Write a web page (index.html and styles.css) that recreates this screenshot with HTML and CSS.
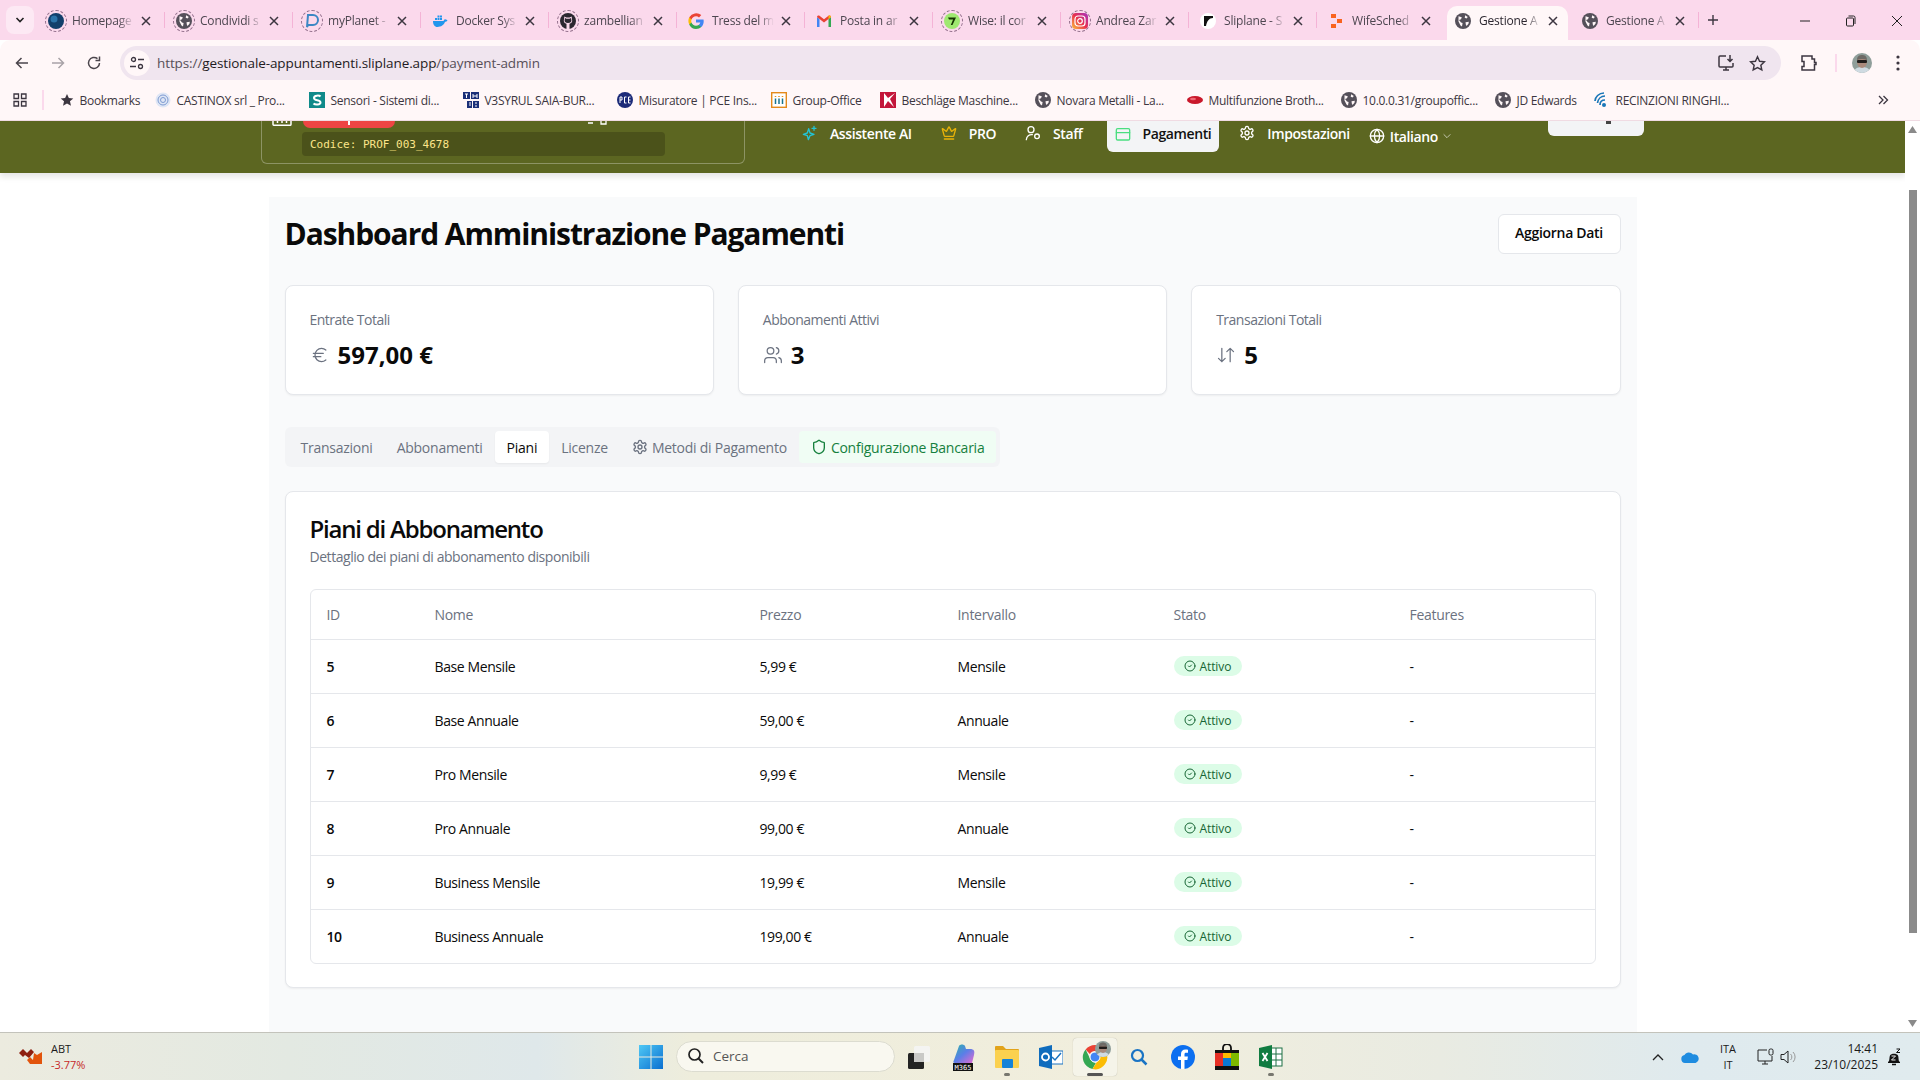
FILE: index.html
```html
<!doctype html>
<html>
    <head>
        <meta charset="utf-8">
        <title>Gestione Appuntamenti - Pagamenti</title>
        <link rel="stylesheet" href="styles.css">
    </head>
    <body>
        <svg class="defs" width="0" height="0">
            <symbol id="i-globe" viewBox="0 0 24 24"><circle cx="12" cy="12" r="10"/><path d="M12 2a14.5 14.5 0 0 0 0 20 14.5 14.5 0 0 0 0-20M2 12h20"/></symbol>
            <symbol id="i-crown" viewBox="0 0 24 24"><path d="M11.562 3.266a.5.5 0 0 1 .876 0L15.39 8.87a1 1 0 0 0 1.516.294L21.183 5.5a.5.5 0 0 1 .798.519l-2.834 10.246a1 1 0 0 1-.956.734H5.81a1 1 0 0 1-.957-.734L2.02 6.02a.5.5 0 0 1 .798-.519l4.276 3.664a1 1 0 0 0 1.516-.294zM5 21h14"/></symbol>
            <symbol id="i-gear" viewBox="0 0 24 24"><path d="M12.22 2h-.44a2 2 0 0 0-2 2v.18a2 2 0 0 1-1 1.73l-.43.25a2 2 0 0 1-2 0l-.15-.08a2 2 0 0 0-2.73.73l-.22.38a2 2 0 0 0 .73 2.73l.15.1a2 2 0 0 1 1 1.72v.51a2 2 0 0 1-1 1.74l-.15.09a2 2 0 0 0-.73 2.73l.22.38a2 2 0 0 0 2.73.73l.15-.08a2 2 0 0 1 2 0l.43.25a2 2 0 0 1 1 1.73V20a2 2 0 0 0 2 2h.44a2 2 0 0 0 2-2v-.18a2 2 0 0 1 1-1.73l.43-.25a2 2 0 0 1 2 0l.15.08a2 2 0 0 0 2.73-.73l.22-.39a2 2 0 0 0-.73-2.73l-.15-.08a2 2 0 0 1-1-1.74v-.5a2 2 0 0 1 1-1.74l.15-.09a2 2 0 0 0 .73-2.73l-.22-.38a2 2 0 0 0-2.73-.73l-.15.08a2 2 0 0 1-2 0l-.43-.25a2 2 0 0 1-1-1.73V4a2 2 0 0 0-2-2z"/><circle cx="12" cy="12" r="3"/></symbol>
            <symbol id="i-check" viewBox="0 0 24 24"><circle cx="12" cy="12" r="10"/><path d="m9 12 2 2 4-4"/></symbol>
            <symbol id="f-globe" viewBox="0 0 16 16"><circle cx="8" cy="8" r="8" fill="#55505a"/><path d="M3.5 3.2 6.8 4.2 6 6.3 4 7 6 9.5 7.6 10 7 13.5 5.5 12.5 3.5 8.5ZM10.200 2.200 12.800 4 11.500 5.600 9.700 4.800ZM10.500 9.200 13.800 8.800 13.500 10.800 11.500 13 10.800 11.500Z" fill="#fff7f8"/></symbol>
            <symbol id="f-close" viewBox="0 0 12 12"><path d="M2 2 10 10M10 2 2 10" fill="none" stroke="#3c3640" stroke-width="1.5"/></symbol>
        </svg>

        <div class="tabstrip">
            <div class="tab-menu"><svg width="10" height="10" viewBox="0 0 10 10"><path d="M1.5 3 5 6.5 8.5 3" fill="none" stroke="#222" stroke-width="1.6"/></svg></div>
            <div class="tab">
                <span class="fav fav-ring"><svg viewBox="0 0 16 16"><circle cx="8" cy="8" r="8" fill="#123f6b"/><circle cx="6" cy="6" r="3.5" fill="#2b73a8"/></svg></span>
                <span class="tab-title">Homepage</span>
                <svg class="tab-close"><use href="#f-close"/></svg>
            </div>
            <div class="tab">
                <span class="fav fav-ring"><svg viewBox="0 0 16 16"><use href="#f-globe"/></svg></span>
                <span class="tab-title">Condividi s</span>
                <svg class="tab-close"><use href="#f-close"/></svg>
            </div>
            <div class="tab">
                <span class="fav fav-ring"><svg viewBox="0 0 16 16"><path d="M4 2h5a5 5 0 0 1 0 10H4l-1 2Z" fill="none" stroke="#3b87c4" stroke-width="2"/></svg></span>
                <span class="tab-title">myPlanet -</span>
                <svg class="tab-close"><use href="#f-close"/></svg>
            </div>
            <div class="tab">
                <span class="fav"><svg viewBox="0 0 16 16"><path d="M1 8h10.500c.6-1.500 1.500-2 2.200-1.500.8.100 1.300.5 1.800 1-.6 1-1.500 1.300-2.500 1.300C12 12 9 14 5.500 14 2.500 14 1 11.500 1 8Z" fill="#2396ed"/><path d="M3 5h2v2H3ZM5.500 5h2v2h-2ZM8 5h2v2H8ZM5.500 2.500h2v2h-2ZM8 2.500h2v2H8Z" fill="#2396ed"/></svg></span>
                <span class="tab-title">Docker Sys</span>
                <svg class="tab-close"><use href="#f-close"/></svg>
            </div>
            <div class="tab">
                <span class="fav fav-ring"><svg viewBox="0 0 16 16"><circle cx="8" cy="8" r="8" fill="#2b2730"/><path d="M4 6.500 4.300 3.500 6.500 4.500H9.500L11.700 3.500 12 6.500C12.800 9 11 10.500 9.500 10.700V16H6.500V10.700C5 10.500 3.200 9 4 6.500Z" fill="#fbd9ec"/><path d="M4.700 6.800 5 5l1.500.8h3L11 5l.3 1.800C12 8.800 10.500 10 8 10S4 8.800 4.700 6.800Z" fill="#2b2730"/></svg></span>
                <span class="tab-title">zambellian</span>
                <svg class="tab-close"><use href="#f-close"/></svg>
            </div>
            <div class="tab">
                <span class="fav"><svg viewBox="0 0 16 16"><path d="M15.700 8.200c0-.6-.1-1.100-.2-1.600H8v3h4.300a3.700 3.700 0 0 1-1.600 2.400v2h2.600c1.500-1.400 2.400-3.400 2.400-5.800Z" fill="#4285f4"/><path d="M8 16c2.200 0 4-.7 5.300-1.960l-2.600-2c-.7.500-1.600.8-2.700.8-2.100 0-3.900-1.400-4.500-3.300H1.300v2.100A8 8 0 0 0 8 16Z" fill="#34a853"/><path d="M3.500 9.500a4.800 4.800 0 0 1 0-3.100V4.300H1.300a8 8 0 0 0 0 7.300Z" fill="#fbbc05"/><path d="M8 3.200c1.200 0 2.200.4 3 1.200l2.300-2.300A8 8 0 0 0 1.300 4.300l2.200 2.100C4.100 4.600 5.900 3.200 8 3.200Z" fill="#ea4335"/></svg></span>
                <span class="tab-title">Tress del m</span>
                <svg class="tab-close"><use href="#f-close"/></svg>
            </div>
            <div class="tab">
                <span class="fav"><svg viewBox="0 0 16 16"><path d="M1 14V4l2.500 2v8Z" fill="#4285f4"/><path d="M15 14V4l-2.500 2v8Z" fill="#34a853"/><path d="M1 4c0-1.500 1.500-2 2.500-1.300L8 6.200l4.500-3.500C13.500 2 15 2.500 15 4l-2.500 2L8 9.500 3.500 6Z" fill="#ea4335"/><path d="M12.500 2.700C13.500 2 15 2.500 15 4l-2.500 2Z" fill="#fbbc05"/></svg></span>
                <span class="tab-title">Posta in ar</span>
                <svg class="tab-close"><use href="#f-close"/></svg>
            </div>
            <div class="tab">
                <span class="fav fav-ring"><svg viewBox="0 0 16 16"><circle cx="8" cy="8" r="8" fill="#9fe870"/><path d="M4 4.500h8L8.500 12H6.800l2.300-5.500H5Z" fill="#163300"/></svg></span>
                <span class="tab-title">Wise: il cor</span>
                <svg class="tab-close"><use href="#f-close"/></svg>
            </div>
            <div class="tab">
                <span class="fav fav-ring"><svg viewBox="0 0 16 16"><defs><linearGradient id="ig" x1="0" y1="1" x2="1" y2="0"><stop offset="0" stop-color="#fdc13a"/><stop offset=".5" stop-color="#e8304f"/><stop offset="1" stop-color="#a632c4"/></linearGradient></defs><rect width="16" height="16" rx="4" fill="url(#ig)"/><rect x="3" y="3" width="10" height="10" rx="3" fill="none" stroke="#fff" stroke-width="1.200"/><circle cx="8" cy="8" r="2.300" fill="none" stroke="#fff" stroke-width="1.200"/></svg></span>
                <span class="tab-title">Andrea Zar</span>
                <svg class="tab-close"><use href="#f-close"/></svg>
            </div>
            <div class="tab">
                <span class="fav"><svg viewBox="0 0 16 16"><circle cx="8" cy="8" r="8" fill="#fff"/><path d="M4 3h9v2C9 5 7 8 6 13H4Z" fill="#111"/></svg></span>
                <span class="tab-title">Sliplane - S</span>
                <svg class="tab-close"><use href="#f-close"/></svg>
            </div>
            <div class="tab">
                <span class="fav"><svg viewBox="0 0 16 16"><path d="M3 1h5v4H3ZM3 11h5v4H3ZM9 6h5v4H9Z" fill="#f9631f"/></svg></span>
                <span class="tab-title">WifeSched</span>
                <svg class="tab-close"><use href="#f-close"/></svg>
            </div>
            <div class="tab tab-active">
                <span class="fav"><svg viewBox="0 0 16 16"><use href="#f-globe"/></svg></span>
                <span class="tab-title">Gestione A</span>
                <svg class="tab-close"><use href="#f-close"/></svg>
            </div>
            <div class="tab">
                <span class="fav"><svg viewBox="0 0 16 16"><use href="#f-globe"/></svg></span>
                <span class="tab-title">Gestione A</span>
                <svg class="tab-close"><use href="#f-close"/></svg>
            </div>
            <div class="tab-new"><svg width="12" height="12" viewBox="0 0 12 12"><path d="M6 1v10M1 6h10" stroke="#3c3640" stroke-width="1.400"/></svg></div>
            <div class="win-controls">
                <svg width="12" height="12" viewBox="0 0 12 12"><path d="M1 6h10" stroke="#222" stroke-width="1"/></svg>
                <svg width="12" height="12" viewBox="0 0 12 12"><rect x="1.500" y="3" width="7" height="8" rx="1" fill="none" stroke="#222"/><path d="M3.500 1h5a1.500 1.500 0 0 1 1.500 1.500V9" fill="none" stroke="#222"/></svg>
                <svg width="12" height="12" viewBox="0 0 12 12"><path d="M1 1l10 10M11 1 1 11" stroke="#222"/></svg>
            </div>
        </div>

        <div class="toolbar">
            <svg class="tool-btn" viewBox="0 0 16 16"><path d="M14 8H3M7.500 3 2.500 8l5 5" fill="none" stroke="#4b454c" stroke-width="1.500"/></svg>
            <svg class="tool-btn" viewBox="0 0 16 16"><path d="M2 8h11M8.500 3l5 5-5 5" fill="none" stroke="#a9a3a8" stroke-width="1.500"/></svg>
            <svg class="tool-btn" viewBox="0 0 16 16"><path d="M13.500 8A5.500 5.500 0 1 1 11.500 3.700M13.500 1.500v4h-4" fill="none" stroke="#4b454c" stroke-width="1.500"/></svg>
            <div class="omnibox">
                <span class="site-chip"><svg width="16" height="16" viewBox="0 0 16 16"><circle cx="4.500" cy="4.500" r="2" fill="none" stroke="#3c3640" stroke-width="1.300"/><path d="M9 4.500h6M1 11.500h6" stroke="#3c3640" stroke-width="1.300"/><circle cx="11.500" cy="11.500" r="2" fill="none" stroke="#3c3640" stroke-width="1.300"/></svg></span>
                <span class="url"><span class="url-dim">https://</span>gestionale-appuntamenti.sliplane.app<span class="url-dim">/payment-admin</span></span>
                <svg class="omni-install" width="18" height="18" viewBox="0 0 18 18"><path d="M9 2H3a1 1 0 0 0-1 1v9a1 1 0 0 0 1 1h12a1 1 0 0 0 1-1V9M6 16h6M9 13v3" fill="none" stroke="#3c3640" stroke-width="1.500"/><path d="M13 1v6M10.500 5 13 7.500 15.500 5" fill="none" stroke="#3c3640" stroke-width="1.500"/></svg>
                <svg class="omni-star" width="17" height="17" viewBox="0 0 24 24"><path d="M12 2.500l2.900 6.300 6.900.8-5.100 4.700 1.400 6.800-6.100-3.400-6.100 3.400 1.400-6.800L2.200 9.600l6.900-.8Z" fill="none" stroke="#3c3640" stroke-width="2"/></svg>
            </div>
            <svg class="tool-ext" width="18" height="18" viewBox="0 0 18 18"><path d="M2 2h10v3h2.500v3.500H16v2h-1.500V16H2v-3.500h2V7.500H2Z" fill="none" stroke="#3c3640" stroke-width="1.500"/></svg>
            <span class="tool-sep"></span>
            <svg class="avatar" viewBox="0 0 20 20"><defs><clipPath id="av"><circle cx="10" cy="10" r="10"/></clipPath></defs><g clip-path="url(#av)"><rect width="20" height="20" fill="#8f9e9a"/><path d="M2 20c0-4 3-6 8-6s8 2 8 6Z" fill="#cfdbe2"/><ellipse cx="10" cy="9" rx="5" ry="6" fill="#a98a7c"/><path d="M5 7c0-4 2.500-5 5-5s5 1 5 5c-3-1.500-7-1.500-10 0Z" fill="#6d6a66"/><rect x="5" y="7" width="10" height="3" rx="1" fill="#1f1c1b"/></g></svg>
            <svg class="tool-menu" width="4" height="16" viewBox="0 0 4 16"><circle cx="2" cy="2" r="1.600" fill="#3c3640"/><circle cx="2" cy="8" r="1.600" fill="#3c3640"/><circle cx="2" cy="14" r="1.600" fill="#3c3640"/></svg>
        </div>

        <div class="bookmarks">
            <svg class="bm-apps" width="14" height="14" viewBox="0 0 14 14"><path d="M1 1h4.500v4.500H1ZM8.500 1H13v4.500H8.500ZM1 8.500h4.500V13H1ZM8.500 8.500H13V13H8.500Z" fill="none" stroke="#3c3640" stroke-width="1.300"/></svg>
            <span class="bm-sep"></span>
            <div class="bm bm-folder"><svg viewBox="0 0 24 24"><path d="M12 1.500l3.200 7 7.600.8-5.700 5 1.700 7.500-6.800-3.900-6.800 3.900 1.700-7.500-5.700-5 7.600-.8Z" fill="#3c3640"/></svg><span>Bookmarks</span></div>
            <div class="bm"><svg viewBox="0 0 16 16"><circle cx="8" cy="8" r="7.500" fill="#dfe6f5"/><circle cx="8" cy="8" r="5" fill="none" stroke="#7e9bd2"/><circle cx="8" cy="8" r="2.500" fill="none" stroke="#7e9bd2"/></svg><span>CASTINOX srl _ Pro...</span></div>
            <div class="bm"><svg viewBox="0 0 16 16"><rect width="16" height="16" fill="#0f8a8a"/><path d="M11.500 4.500C10.500 3.300 5 3 5 6c0 3 6.500 1.500 6.500 4.500 0 2.500-5.500 2.500-7 1" fill="none" stroke="#fff" stroke-width="2"/></svg><span>Sensori - Sistemi di...</span></div>
            <div class="bm"><svg viewBox="0 0 16 16"><path d="M0 0h7v7H0ZM8 0h8v7H8ZM4 9h5v7H4ZM10 9h6v7h-6Z" fill="#1a2f78"/><path d="M2 2h3M3.500 2v4M10 2v4M14 2v4M10 4h4M6 11h2M6 13h2M12 11h2M12 14h2" stroke="#fff" fill="none"/></svg><span>V3SYRUL SAIA-BUR...</span></div>
            <div class="bm"><svg viewBox="0 0 16 16"><circle cx="8" cy="8" r="8" fill="#1b2a78"/><path d="M3 5v6M3 5h2v3H3M7.500 5h2M7.500 5v6h2M11.500 5h2M11.500 5v6h2M11.500 8h2" fill="none" stroke="#fff"/></svg><span>Misuratore | PCE Ins...</span></div>
            <div class="bm bm-group"><svg viewBox="0 0 16 16"><rect x=".7" y=".7" width="14.600" height="14.600" fill="#fff" stroke="#e48a1c" stroke-width="1.400"/><path d="M4.500 4v1M8 4v1M11.500 4v1" stroke="#e48a1c" stroke-width="1.500"/><path d="M4.500 6.500V12M8 6.500V12M11.500 6.500V12" stroke="#18748f" stroke-width="1.500"/></svg><span>Group-Office</span></div>
            <div class="bm bm-besch"><svg viewBox="0 0 16 16"><rect width="16" height="16" fill="#c3163a"/><path d="M4 1v14l4-6 6 6-4-8 5-6-7 5Z" fill="#fff"/></svg><span>Beschläge Maschine...</span></div>
            <div class="bm bm-novara"><svg viewBox="0 0 16 16"><use href="#f-globe"/></svg><span>Novara Metalli - La...</span></div>
            <div class="bm"><svg viewBox="0 0 16 16"><ellipse cx="8" cy="8" rx="8" ry="4" fill="#c9182b"/><ellipse cx="6" cy="7" rx="3" ry="1.200" fill="#ef6a76"/></svg><span>Multifunzione Broth...</span></div>
            <div class="bm"><svg viewBox="0 0 16 16"><use href="#f-globe"/></svg><span>10.0.0.31/groupoffic...</span></div>
            <div class="bm bm-jd"><svg viewBox="0 0 16 16"><use href="#f-globe"/></svg><span>JD Edwards</span></div>
            <div class="bm"><svg viewBox="0 0 16 16"><path d="M1 9C1 5 5 1 10 1M3.500 11C4 7 7 4 11 4M6 13c0-3 2-5 5-5" fill="none" stroke="#1a77b8" stroke-width="1.700"/><circle cx="10" cy="13" r="2" fill="#1a77b8"/></svg><span>RECINZIONI RINGHI...</span></div>
            <svg class="bm-more" width="12" height="12" viewBox="0 0 12 12"><path d="M2 2l4 4-4 4M6.500 2l4 4-4 4" fill="none" stroke="#3c3640" stroke-width="1.300"/></svg>
        </div>

        <div class="viewport">
            <div class="page">
                <header class="app-header">
                    <div class="profile-box">
                        <div class="profile-top">
                            <svg class="profile-cal" width="20" height="5" viewBox="0 0 20 5"><path d="M1 0v3.300a1 1 0 0 0 1 1h16a1 1 0 0 0 1-1V0" fill="none" stroke="#fff" stroke-width="1.500"/><path d="M5.500 0v2M10 0v2M14.500 0v2" stroke="#fff" stroke-width="1.500"/></svg>
                            <span class="profile-pill"><span class="profile-pill-tick"></span></span>
                            <svg class="profile-tail" width="20" height="4" viewBox="0 0 20 4"><path d="M0 2h5M13 0v3h5V0" fill="none" stroke="#fff" stroke-width="1.300"/></svg>
                        </div>
                        <div class="profile-code">Codice: PROF_003_4678</div>
                    </div>
                    <nav class="nav">
                        <a class="nav-item"><svg class="ico ico-cyan" viewBox="0 0 24 24"><path d="M10 5.500 12 12l6 2-6 2-2.500 6-1.500-6-6-2 6-2ZM18 2v6M15 5h6"/></svg>Assistente AI</a>
                        <a class="nav-item"><svg class="ico ico-gold"><use href="#i-crown"/></svg>PRO</a>
                        <a class="nav-item"><svg class="ico" viewBox="0 0 24 24"><circle cx="9" cy="7" r="4.500"/><path d="M2 22a8 8 0 0 1 9-7.500"/><circle cx="18" cy="17" r="3.500"/></svg>Staff</a>
                        <a class="nav-item nav-active"><svg class="ico ico-green" viewBox="0 0 24 24"><rect x="2" y="4" width="20" height="17" rx="2"/><path d="M2 10h20"/></svg>Pagamenti</a>
                        <a class="nav-item"><svg class="ico"><use href="#i-gear"/></svg>Impostazioni</a>
                        <a class="nav-lang"><svg class="ico"><use href="#i-globe"/></svg>Italiano<svg class="nav-chevron" viewBox="0 0 24 24"><path d="m4 8 8 8 8-8"/></svg></a>
                    </nav>
                    <div class="header-btn"><span class="header-btn-dot"></span></div>
                </header>

                <main class="main">
                    <div class="title-row">
                        <h1>Dashboard Amministrazione Pagamenti</h1>
                        <button class="refresh">Aggiorna Dati</button>
                    </div>

                    <section class="stats">
                        <div class="stat">
                            <div class="stat-label">Entrate Totali</div>
                            <div class="stat-value"><svg class="stat-ico" viewBox="0 0 24 24"><path d="M4 10h12M4 14h9M19 6a7.700 7.700 0 0 0-5.200-2A7.900 7.900 0 0 0 6 12c0 4.400 3.500 8 7.800 8 2 0 3.800-.8 5.200-2"/></svg>597,00 €</div>
                        </div>
                        <div class="stat">
                            <div class="stat-label">Abbonamenti Attivi</div>
                            <div class="stat-value"><svg class="stat-ico" viewBox="0 0 24 24"><path d="M16 21v-2a4 4 0 0 0-4-4H6a4 4 0 0 0-4 4v2"/><circle cx="9" cy="7" r="4"/><path d="M22 21v-2a4 4 0 0 0-3-3.870M16 3.130a4 4 0 0 1 0 7.750"/></svg>3</div>
                        </div>
                        <div class="stat">
                            <div class="stat-label">Transazioni Totali</div>
                            <div class="stat-value"><svg class="stat-ico" viewBox="0 0 24 24"><path d="m3 16 4 4 4-4M7 20V4M21 8l-4-4-4 4M17 4v16"/></svg>5</div>
                        </div>
                    </section>

                    <div class="tabs">
                        <span class="tabs-item">Transazioni</span>
                        <span class="tabs-item">Abbonamenti</span>
                        <span class="tabs-item tabs-current">Piani</span>
                        <span class="tabs-item">Licenze</span>
                        <span class="tabs-item"><svg class="tabs-ico"><use href="#i-gear"/></svg>Metodi di Pagamento</span>
                        <span class="tabs-item tabs-bank"><svg class="tabs-ico" viewBox="0 0 24 24"><path d="M20 13c0 5-3.500 7.500-7.660 8.950a1 1 0 0 1-.67-.01C7.500 20.500 4 18 4 13V6a1 1 0 0 1 1-1c2 0 4.500-1.200 6.240-2.720a1.170 1.170 0 0 1 1.520 0C14.510 3.810 17 5 19 5a1 1 0 0 1 1 1z"/></svg>Configurazione Bancaria</span>
                    </div>

                    <section class="plans">
                        <h2>Piani di Abbonamento</h2>
                        <p class="plans-sub">Dettaglio dei piani di abbonamento disponibili</p>
                        <div class="table-wrap">
                            <table>
                                <colgroup>
                                    <col class="c-id"><col class="c-name"><col class="c-price"><col class="c-int"><col class="c-state"><col class="c-feat">
                                </colgroup>
                                <thead>
                                    <tr><th>ID</th><th>Nome</th><th>Prezzo</th><th>Intervallo</th><th>Stato</th><th>Features</th></tr>
                                </thead>
                                <tbody>
                                    <tr><td class="cell-id">5</td><td>Base Mensile</td><td>5,99 €</td><td>Mensile</td><td><span class="badge"><svg><use href="#i-check"/></svg>Attivo</span></td><td>-</td></tr>
                                    <tr><td class="cell-id">6</td><td>Base Annuale</td><td>59,00 €</td><td>Annuale</td><td><span class="badge"><svg><use href="#i-check"/></svg>Attivo</span></td><td>-</td></tr>
                                    <tr><td class="cell-id">7</td><td>Pro Mensile</td><td>9,99 €</td><td>Mensile</td><td><span class="badge"><svg><use href="#i-check"/></svg>Attivo</span></td><td>-</td></tr>
                                    <tr><td class="cell-id">8</td><td>Pro Annuale</td><td>99,00 €</td><td>Annuale</td><td><span class="badge"><svg><use href="#i-check"/></svg>Attivo</span></td><td>-</td></tr>
                                    <tr><td class="cell-id">9</td><td>Business Mensile</td><td>19,99 €</td><td>Mensile</td><td><span class="badge"><svg><use href="#i-check"/></svg>Attivo</span></td><td>-</td></tr>
                                    <tr><td class="cell-id">10</td><td>Business Annuale</td><td>199,00 €</td><td>Annuale</td><td><span class="badge"><svg><use href="#i-check"/></svg>Attivo</span></td><td>-</td></tr>
                                </tbody>
                            </table>
                        </div>
                    </section>
                </main>
            </div>
            <div class="scrollbar">
                <svg width="9" height="7" viewBox="0 0 9 7"><path d="M4.500 0 9 7H0Z" fill="#8a8a8a"/></svg>
                <div class="scroll-thumb"></div>
                <svg width="9" height="7" viewBox="0 0 9 7"><path d="M4.500 7 0 0h9Z" fill="#8a8a8a"/></svg>
            </div>
        </div>

        <footer class="taskbar">
            <div class="widget">
                <svg width="24" height="18" viewBox="0 0 24 18"><path d="M0 6 4 2l4 4 4-4 3 3-5 6-4-3-2 2Z" fill="#8e1f10"/><path d="M15 6l3 2 5-3v12H11l-3-4 3-3 3 3Z" fill="#e2540c"/></svg>
                <div class="widget-text"><span>ABT</span><span class="widget-down">-3.77%</span></div>
            </div>
            <div class="task-center">
                <div class="task-icon"><svg width="24" height="24" viewBox="0 0 24 24"><defs><linearGradient id="win" x1="0" y1="0" x2="1" y2="1"><stop offset="0" stop-color="#4fc8f5"/><stop offset="1" stop-color="#0a6fd0"/></linearGradient></defs><path d="M0 0h11.500v11.500H0ZM12.500 0H24v11.500H12.500ZM0 12.500h11.500V24H0ZM12.500 12.500H24V24H12.500Z" fill="url(#win)"/></svg></div>
                <div class="search"><svg width="18" height="18" viewBox="0 0 18 18"><circle cx="7.500" cy="7.500" r="5.500" fill="none" stroke="#222" stroke-width="1.700"/><path d="M11.500 11.500 16 16" stroke="#222" stroke-width="1.900"/></svg><span>Cerca</span></div>
                <div class="task-icons">
                    <div class="task-icon"><svg width="24" height="24" viewBox="0 0 24 24"><rect x="7" y="1" width="16" height="16" rx="1.500" fill="#f4f4f2"/><rect x="1" y="8" width="16" height="16" rx="1.500" fill="#232323"/><rect x="7" y="8" width="10" height="9" fill="#c9c9c7"/></svg></div>
                    <div class="task-icon"><svg width="26" height="28" viewBox="0 0 26 28"><defs><linearGradient id="m365" x1="0" y1="0" x2="1" y2="1"><stop offset="0" stop-color="#2bb5a8"/><stop offset=".5" stop-color="#5b7ee8"/><stop offset="1" stop-color="#e86ad0"/></linearGradient></defs><path d="M4 17 9 3c1-2 5-2 6 0l1 3h4c4 0 5 2 4 6l-2 8H5c-2 0-2-1-1-3Z" fill="url(#m365)"/><rect x="3" y="20" width="20" height="8" fill="#111"/><text x="13" y="27" class="m365-text">M365</text></svg></div>
                    <div class="task-icon task-dot"><svg width="26" height="24" viewBox="0 0 26 24"><path d="M1 2a1 1 0 0 1 1-1h7l3 3h12a1 1 0 0 1 1 1v5H1Z" fill="#e2a31a"/><rect x="1" y="5" width="24" height="18" rx="1" fill="#fbd14f"/><rect x="8" y="14" width="11" height="9" rx="1" fill="#1483d8"/></svg></div>
                    <div class="task-icon"><svg width="24" height="24" viewBox="0 0 24 24"><rect x="9" y="6" width="15" height="13" fill="#fff" stroke="#1a73c0"/><path d="M13 12l3 3 6-7" fill="none" stroke="#1a73c0" stroke-width="1.500"/><path d="M0 3 13 0v24L0 21Z" fill="#0f6cbd"/><circle cx="6.500" cy="12" r="3.500" fill="none" stroke="#fff" stroke-width="1.800"/></svg></div>
                    <div class="task-icon task-chrome"><svg width="26" height="26" viewBox="0 0 26 26"><path d="M13 1a12 12 0 0 1 10.400 6H13a6 6 0 0 0-5.200 3L3.600 5.500A12 12 0 0 1 13 1Z" fill="#ea4335"/><path d="M3.600 5.500 8.800 16a6 6 0 0 0 5 3L10.500 25A12 12 0 0 1 3.600 5.500Z" fill="#34a853"/><path d="M23.400 7A12 12 0 0 1 10.500 25L16 16a6 6 0 0 0 0-9Z" fill="#fbbc05"/><circle cx="13" cy="13" r="5" fill="#4285f4" stroke="#fff"/></svg><svg class="chrome-avatar" viewBox="0 0 20 20"><g clip-path="url(#av)"><rect width="20" height="20" fill="#8f9e9a"/><path d="M2 20c0-4 3-6 8-6s8 2 8 6Z" fill="#cfdbe2"/><ellipse cx="10" cy="9" rx="5" ry="6" fill="#a98a7c"/><path d="M5 7c0-4 2.500-5 5-5s5 1 5 5c-3-1.500-7-1.500-10 0Z" fill="#6d6a66"/><rect x="5" y="7" width="10" height="3" rx="1" fill="#1f1c1b"/></g></svg></div>
                    <div class="task-icon"><svg width="18" height="18" viewBox="0 0 18 18"><circle cx="7.500" cy="7.500" r="5.500" fill="none" stroke="#1a74c4" stroke-width="2.200"/><path d="M11.500 11.500 16.500 16.500" stroke="#1a74c4" stroke-width="2.500"/></svg></div>
                    <div class="task-icon"><svg width="24" height="24" viewBox="0 0 24 24"><circle cx="12" cy="12" r="12" fill="#0c6ff0"/><path d="M10 24v-9H7v-3.500h3V9c0-3 1.800-4.500 4.400-4.500 1.300 0 2.300.1 2.600.2v3h-1.800c-1.400 0-1.700.7-1.700 1.700v2.100h3.400l-.5 3.500h-2.900v9Z" fill="#fff"/></svg></div>
                    <div class="task-icon"><svg width="24" height="26" viewBox="0 0 24 26"><path d="M8 7V4a4 4 0 0 1 8 0v3" fill="none" stroke="#111" stroke-width="1.800"/><rect y="6" width="24" height="20" fill="#111"/><rect y="9" width="8" height="13" fill="#e63026"/><rect x="8" y="9" width="8" height="13" fill="#0a78d4"/><rect x="16" y="9" width="8" height="13" fill="#7fba00"/><rect x="8" y="9" width="8" height="5" fill="#ffb900"/></svg></div>
                    <div class="task-icon task-dot"><svg width="24" height="24" viewBox="0 0 24 24"><rect x="8" y="3" width="15" height="18" fill="#fff" stroke="#1d7044"/><path d="M12 3v18M17 3v18M8 9h15M8 15h15" stroke="#1d7044"/><path d="M0 3 13 0v24L0 21Z" fill="#107c41"/><path d="M3.500 8l5 8M8.500 8l-5 8" stroke="#fff" stroke-width="1.800"/></svg></div>
                </div>
            </div>
            <div class="tray">
                <svg class="tray-up" width="12" height="8" viewBox="0 0 12 8"><path d="M1 7l5-5 5 5" fill="none" stroke="#222" stroke-width="1.300"/></svg>
                <svg class="tray-cloud" width="18" height="12" viewBox="0 0 18 12"><path d="M4 12a4 4 0 0 1-.5-7.900A5 5 0 0 1 12 3.500 4 4 0 0 1 14.500 12Z" fill="#1f8ce0"/></svg>
                <div class="tray-lang"><span>ITA</span><span>IT</span></div>
                <svg class="tray-net" width="18" height="18" viewBox="0 0 18 18"><path d="M10 2H1v11h14V8M5 16h6M8 13v3" fill="none" stroke="#222" stroke-width="1"/><rect x="12" y="1" width="4" height="6" rx="1.500" fill="none" stroke="#222"/></svg>
                <svg class="tray-vol" width="18" height="16" viewBox="0 0 18 16"><path d="M1 5.500h3L8 2v12l-4-3.500H1Z" fill="none" stroke="#222"/><path d="M10.500 5a4 4 0 0 1 0 6M13 3a7 7 0 0 1 0 10" fill="none" stroke="#999"/></svg>
                <div class="tray-clock"><span>14:41</span><span>23/10/2025</span></div>
                <svg class="tray-bell" width="14" height="18" viewBox="0 0 14 18"><path d="M1 14c2-1 1-4 2-6.500C4 5 10 5 11 7.500S11 13 13 14v1H1Z" fill="#111"/><path d="M5 16.500h4" stroke="#111" stroke-width="1.500"/><path d="M4.500 8h4l-4 4h4" fill="none" stroke="#eee"/><path d="M9.500 1h3.500l-3.500 3.500H13" fill="none" stroke="#111"/></svg>
            </div>
        </footer>
    </body>
</html>
```

FILE: styles.css
```css
* {
    box-sizing: border-box;
}

html, body {
    margin: 0;
    height: 100%;
    overflow: hidden;
}

body {
    display: flex;
    flex-direction: column;
    font-family: "Open Sans", "Noto Sans", sans-serif;
    color: #0a0a0a;
    background: #fff;
}

.defs {
    position: absolute;
}

/* browser tabs */
.tabstrip {
    display: flex;
    flex: none;
    height: 40px;
    padding-top: 6px;
    background: #fbd9ec;
}

.tab-menu {
    display: flex;
    align-items: center;
    justify-content: center;
    width: 28px;
    height: 28px;
    margin: 0 3px 0 6px;
    border-radius: 8px;
    background: #fde9f4;
}

.tab {
    position: relative;
    display: flex;
    align-items: center;
    flex: none;
    width: 128px;
    height: 34px;
    padding: 0 13px 5px 11px;
    font-size: 12px;
    letter-spacing: -.2px;
    color: #4d4650;
}

.tab::after {
    content: "";
    position: absolute;
    right: 0;
    top: 6px;
    width: 1.5px;
    height: 16px;
    background: #f4b3d6;
}

.tab:nth-last-of-type(5)::after,
.tab-active::after {
    display: none;
}

.tab-active {
    width: 121px;
    margin: 0 3px 0 2px;
    padding-left: 8px;
    padding-right: 9px;
    border-radius: 10px 10px 0 0;
    background: #fff7f8;
    color: #2c2730;
}

.fav {
    position: relative;
    display: flex;
    flex: none;
    width: 16px;
    height: 16px;
    margin-right: 8px;
}

.fav svg {
    width: 16px;
    height: 16px;
}

.fav-ring::after {
    content: "";
    position: absolute;
    inset: -3px;
    border: 1px dashed #93708c;
    border-radius: 50%;
}

.tab-title {
    flex: 1;
    min-width: 0;
    overflow: hidden;
    white-space: nowrap;
    -webkit-mask-image: linear-gradient(90deg, #000 75%, transparent 100%);
    mask-image: linear-gradient(90deg, #000 75%, transparent 100%);
}

.tab-close {
    flex: none;
    width: 12px;
    height: 12px;
    margin-left: 6px;
}

.tab-new {
    display: flex;
    align-items: center;
    justify-content: center;
    width: 28px;
    height: 28px;
}

.win-controls {
    display: flex;
    align-items: flex-start;
    gap: 34px;
    margin-left: auto;
    padding: 9px 17px 0 0;
}

/* address bar */
.toolbar {
    display: flex;
    align-items: flex-end;
    flex: none;
    height: 40px;
    padding-left: 14px;
    border-radius: 10px 10px 0 0;
    background: #fff7f8;
}

.tool-btn {
    width: 16px;
    height: 16px;
    margin: 0 20px 9px 0;
}

.omnibox {
    display: flex;
    align-items: center;
    width: 1661px;
    height: 34px;
    margin-left: -2px;
    padding: 0 0 0 4px;
    border-radius: 17px;
    background: #f0e5ef;
}

.site-chip {
    display: flex;
    align-items: center;
    justify-content: center;
    width: 26px;
    height: 26px;
    border-radius: 50%;
    background: #fff7f8;
}

.url {
    margin-left: 7px;
    font-size: 13.5px;
    letter-spacing: -.1px;
    color: #1f1b22;
    white-space: nowrap;
}

.url-dim {
    color: #574f58;
}

.omni-install {
    margin-left: auto;
}

.omni-star {
    margin: 0 15px 0 14px;
}

.tool-ext {
    margin: 0 0 8px 19px;
}

.tool-sep {
    width: 1.5px;
    height: 18px;
    margin: 0 0 8px 17px;
    background: #fbd9ec;
}

.avatar {
    width: 20px;
    height: 20px;
    margin: 0 0 7px 15px;
}

.tool-menu {
    margin: 0 0 9px 24px;
}

/* bookmarks */
.bookmarks {
    display: flex;
    align-items: center;
    flex: none;
    height: 41px;
    padding-left: 13px;
    border-bottom: 1px solid #f0dbe3;
    background: #fff7f8;
    font-size: 12px;
    letter-spacing: -.28px;
    color: #3c3640;
}

.bm-sep {
    width: 1.5px;
    height: 20px;
    margin: 0 16px 0 15px;
    background: #fbd9ec;
}

.bm {
    display: flex;
    align-items: center;
    flex: none;
    gap: 6px;
    width: 154px;
    overflow: hidden;
    white-space: nowrap;
}

.bm svg {
    flex: none;
    width: 16px;
    height: 16px;
}

.bm-folder {
    gap: 6px;
    width: 95px;
}

.bm-folder svg {
    width: 14px;
    height: 14px;
}

.bm-group {
    width: 109px;
}

.bm-besch {
    width: 155px;
}

.bm-novara {
    width: 152px;
}

.bm-jd {
    width: 99px;
}

.bm-more {
    margin: 0 31px 0 auto;
}

/* page area */
.viewport {
    display: flex;
    flex: 1;
    min-height: 0;
}

.page {
    flex: 1;
    min-width: 0;
    overflow: hidden;
    background: #fff;
}

.scrollbar {
    display: flex;
    flex-direction: column;
    align-items: center;
    flex: none;
    width: 15px;
    padding: 5px 0;
    background: #fff;
}

.scroll-thumb {
    width: 8px;
    height: 743px;
    margin: 57px 0 auto;
    background: #8b8b8b;
}

.app-header {
    display: flex;
    height: 52px;
    padding-left: 261px;
    overflow: hidden;
    background: #5c6621;
    box-shadow: 0 4px 6px rgba(0,0,0,.1);
}

.profile-box {
    display: flex;
    flex-direction: column;
    flex: none;
    justify-content: flex-end;
    width: 484px;
    height: 43px;
    padding: 0 0 7px 10px;
    border: 1px solid rgba(255,255,255,.3);
    border-top: none;
    border-radius: 0 0 6px 6px;
}

.profile-top {
    display: flex;
    align-items: flex-start;
    height: 12px;
}

.profile-cal {
    flex: none;
}

.profile-pill {
    display: flex;
    justify-content: center;
    width: 92px;
    height: 7px;
    margin-left: 11px;
    border-radius: 0 0 10px 10px;
    background: #ef4444;
}

.profile-pill-tick {
    width: 1.5px;
    height: 4px;
    background: #fff;
}

.profile-tail {
    margin-left: 193px;
}

.profile-code {
    width: 363px;
    height: 24px;
    margin-left: 30px;
    padding-left: 8px;
    border-radius: 4px;
    background: #4b521a;
    font-family: "DejaVu Sans Mono", "Liberation Mono", monospace;
    font-size: 11px;
    line-height: 25px;
    color: #fde68a;
}

.nav {
    display: flex;
    align-items: flex-start;
    gap: 13px;
    margin: -6px 0 0 49px;
}

.nav-item {
    display: flex;
    align-items: center;
    gap: 12px;
    height: 36px;
    padding: 0 8px;
    border-radius: 6px;
    font-size: 14px;
    font-weight: 600;
    letter-spacing: -.4px;
    color: #fff;
    white-space: nowrap;
}

.nav-active {
    height: 37px;
    margin: 0 -1px 0 3px;
    background: #f3f4f6;
    color: #111;
}

.ico {
    flex: none;
    width: 16px;
    height: 16px;
    fill: none;
    stroke: #fff;
    stroke-width: 2;
    stroke-linecap: round;
    stroke-linejoin: round;
}

.ico-cyan {
    stroke: #22c4d6;
}

.ico-gold {
    stroke: #eab308;
}

.ico-green {
    stroke: #4ade80;
}

.nav-lang {
    display: flex;
    align-items: center;
    gap: 5px;
    height: 36px;
    margin: 3px 0 0 -2px;
    font-size: 14px;
    font-weight: 600;
    letter-spacing: -.4px;
    color: #fff;
}

.nav-chevron {
    width: 10px;
    height: 10px;
    margin-left: -1px;
    fill: none;
    stroke: rgba(255,255,255,.75);
    stroke-width: 2;
}

.header-btn {
    display: flex;
    justify-content: center;
    width: 96px;
    height: 15px;
    margin-left: auto;
    margin-right: 261px;
    border-radius: 0 0 6px 6px;
    background: #f3f4f6;
}

.header-btn-dot {
    width: 5px;
    height: 3px;
    margin-left: 24px;
    background: #444;
}

/* dashboard */
.main {
    width: 1368px;
    height: 1000px;
    margin: 24px auto 0;
    padding: 16px;
    background: #f9fafb;
}

.title-row {
    display: flex;
    align-items: center;
    justify-content: space-between;
    margin-bottom: 31px;
}

h1 {
    margin: 0;
    font-size: 30px;
    font-weight: 700;
    letter-spacing: -1.07px;
}

.refresh {
    width: 123px;
    height: 40px;
    padding: 0 0 2px;
    border: 1px solid #e5e7eb;
    border-radius: 6px;
    background: #fff;
    font-family: inherit;
    font-size: 14px;
    font-weight: 600;
    letter-spacing: -.3px;
    color: #0a0a0a;
}

.stats {
    display: grid;
    grid-template-columns: repeat(3, 1fr);
    gap: 24px;
    margin-bottom: 32px;
}

.stat {
    height: 110px;
    padding: 24px;
    border: 1px solid #e5e7eb;
    border-radius: 8px;
    background: #fff;
    box-shadow: 0 1px 2px rgba(0,0,0,.05);
}

.stat-label {
    font-size: 14px;
    line-height: 20px;
    font-weight: 500;
    letter-spacing: -.5px;
    color: #6b7280;
}

.stat-value {
    display: flex;
    align-items: center;
    gap: 8px;
    margin-top: 9px;
    font-size: 24px;
    line-height: 32px;
    font-weight: 700;
    letter-spacing: 0;
}

.stat-ico {
    width: 20px;
    height: 20px;
    fill: none;
    stroke: #6b7280;
    stroke-width: 1.5;
    stroke-linecap: round;
    stroke-linejoin: round;
}

.tabs {
    display: inline-flex;
    height: 40px;
    padding: 4px;
    margin-bottom: 24px;
    border-radius: 6px;
    background: #f3f4f6;
    vertical-align: top;
}

.tabs-item {
    display: flex;
    align-items: center;
    gap: 4px;
    padding: 0 12px;
    border-radius: 4px;
    font-size: 14px;
    font-weight: 500;
    letter-spacing: -.25px;
    color: #6b7280;
    white-space: nowrap;
}

.tabs-current {
    background: #fff;
    color: #0a0a0a;
    box-shadow: 0 1px 2px rgba(0,0,0,.05);
}

.tabs-bank {
    background: #f0fdf4;
    color: #15803d;
}

.tabs-ico {
    width: 16px;
    height: 16px;
    fill: none;
    stroke: currentColor;
    stroke-width: 2;
    stroke-linecap: round;
    stroke-linejoin: round;
}

.plans {
    height: 497px;
    padding: 23px 24px 24px;
    border: 1px solid #e5e7eb;
    border-radius: 8px;
    background: #fff;
    box-shadow: 0 1px 2px rgba(0,0,0,.05);
}

h2 {
    margin: 0;
    font-size: 24px;
    line-height: 28px;
    font-weight: 600;
    letter-spacing: -1.2px;
}

.plans-sub {
    margin: 4px 0 0;
    font-size: 14px;
    line-height: 20px;
    letter-spacing: -.45px;
    color: #6b7280;
}

.table-wrap {
    margin-top: 22px;
    border: 1px solid #e5e7eb;
    border-radius: 6px;
    overflow: hidden;
}

table {
    width: 100%;
    table-layout: fixed;
    border-collapse: collapse;
    font-size: 14px;
    letter-spacing: -.4px;
}

.c-id { width: 108px; }
.c-name { width: 325px; }
.c-price { width: 198px; }
.c-int { width: 216px; }
.c-state { width: 236px; }

th {
    height: 49px;
    padding: 0 16px;
    border-bottom: 1px solid #e5e7eb;
    text-align: left;
    font-weight: 500;
    letter-spacing: -.3px;
    color: #6b7280;
}

td {
    height: 54px;
    padding: 0 16px;
    border-bottom: 1px solid #e5e7eb;
}

tr:last-child td {
    border-bottom: none;
}

.cell-id {
    font-weight: 600;
}

.badge {
    display: inline-flex;
    align-items: center;
    gap: 4px;
    width: 68px;
    height: 20px;
    padding-left: 10px;
    border-radius: 10px;
    background: #dcfce7;
    font-size: 12px;
    font-weight: 500;
    letter-spacing: -.1px;
    color: #166534;
}

.badge svg {
    flex: none;
    width: 12px;
    height: 12px;
    fill: none;
    stroke: #166534;
    stroke-width: 2;
    stroke-linecap: round;
    stroke-linejoin: round;
}

/* windows taskbar */
.taskbar {
    display: flex;
    align-items: center;
    flex: none;
    height: 48px;
    border-top: 1px solid #c3c3bb;
    background: linear-gradient(90deg, #ecebdf 0, #e3e9e2 15%, #dfe8ea 28%, #eeeddc 36%, #f1eedd 60%, #e9ebe2 75%, #dfeaee 88%, #e0ebee 100%);
    font-size: 11px;
    color: #1a1a1a;
}

.widget {
    display: flex;
    align-items: center;
    flex: none;
    gap: 8px;
    width: 629px;
    padding: 0 0 1px 19px;
}

.widget-text {
    display: flex;
    flex-direction: column;
    gap: 1px;
    line-height: 15px;
}

.widget-down {
    color: #c62828;
}

.task-center {
    display: flex;
    align-items: center;
}

.task-icon {
    position: relative;
    display: flex;
    align-items: center;
    justify-content: center;
    flex: none;
    width: 44px;
    height: 38px;
}

.task-dot::after,
.task-chrome::after {
    content: "";
    position: absolute;
    left: 19px;
    bottom: 0;
    width: 6px;
    height: 3px;
    border-radius: 2px;
    background: #77776f;
}

.task-chrome {
    border-radius: 4px;
    background: #f5f4e9;
    box-shadow: 0 0 1px rgba(0,0,0,.3);
}

.task-chrome::after {
    left: 14px;
    width: 16px;
    background: #555;
}

.chrome-avatar {
    position: absolute;
    top: 3px;
    right: 6px;
    width: 16px;
    height: 16px;
}

.search {
    display: flex;
    align-items: center;
    gap: 8px;
    width: 219px;
    height: 31px;
    margin: 0 2px 0 3px;
    padding: 0 0 1px 10px;
    border: 1px solid #dcdcd0;
    border-radius: 16px;
    background: #f9f8f0;
    font-size: 13.5px;
    color: #555;
}

.task-icons {
    display: flex;
    align-items: center;
}

.m365-text {
    font-family: "DejaVu Sans Mono", monospace;
    font-size: 7px;
    text-anchor: middle;
    fill: #fff;
}

.tray {
    display: flex;
    align-items: center;
    margin-left: 359px;
}

.tray-cloud {
    margin-left: 17px;
}

.tray-lang {
    display: flex;
    flex-direction: column;
    align-items: center;
    gap: 1px;
    width: 20px;
    margin: 0 0 1px 19px;
    line-height: 15px;
}

.tray-net {
    margin-left: 19px;
}

.tray-vol {
    margin-left: 5px;
}

.tray-clock {
    display: flex;
    flex-direction: column;
    align-items: flex-end;
    gap: 1px;
    width: 80px;
    margin-bottom: 1px;
    font-size: 12px;
    line-height: 15px;
}

.tray-bell {
    margin-left: 9px;
}
```
